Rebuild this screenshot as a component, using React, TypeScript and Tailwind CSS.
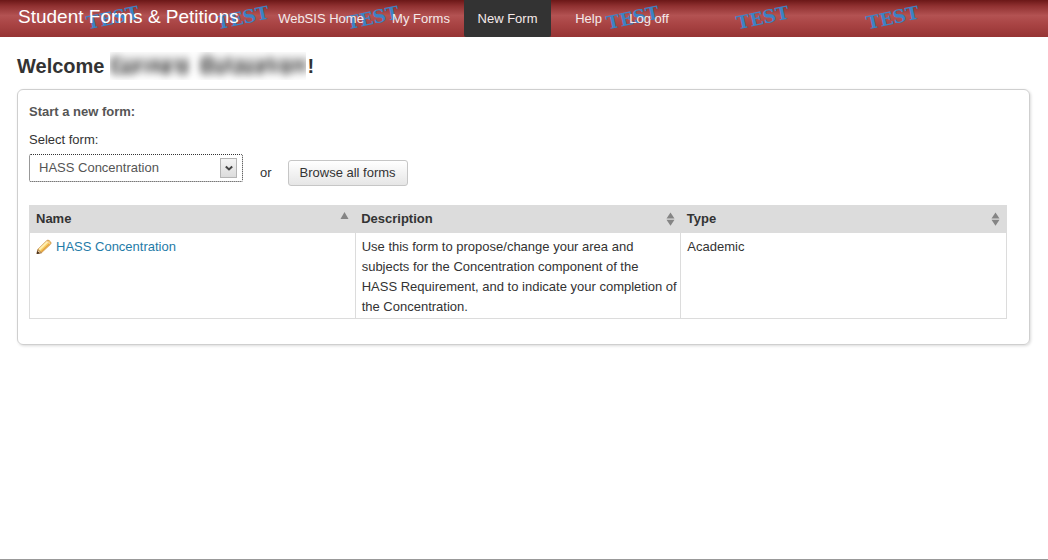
import { useState } from 'react';

const navItems = [
  { label: 'WebSIS Home', style: 'w-[114px]' },
  { label: 'My Forms', style: 'w-[86px]' },
  { label: 'New Form', style: 'w-[87px] rounded-b-xs bg-[#333333]' },
  { label: 'Help', style: 'w-[75px]' },
  { label: 'Log off', style: 'w-[46px]' },
];

function TestMarks() {
  return (
    <div aria-hidden="true" className="absolute inset-0 flex overflow-hidden pl-[48px]">
      {[0, 1, 2, 3, 4, 5, 6].map((n) => (
        <div key={n} className="flex h-[35px] w-[130px] shrink-0 items-center justify-center">
          <span className="-rotate-[12deg] font-['DejaVu_Serif',serif] text-[18px] leading-none font-bold text-[#3d82c4]">
            TEST
          </span>
        </div>
      ))}
    </div>
  );
}

function Header() {
  return (
    <header className="relative bg-[linear-gradient(to_bottom,#6b1717_0%,#8f3030_16%,#b35252_42%,#a94444_65%,#963434_100%)] text-white">
      <TestMarks />
      <div className="relative flex h-[37px] items-center pl-[18px]">
        <h1 className="w-[246px] text-[19px] leading-6 whitespace-nowrap pb-1">Student Forms &amp; Petitions</h1>
        <nav className="flex h-full">
          {navItems.map((item) => (
            <a
              key={item.label}
              href="#"
              className={`flex h-full items-center justify-center text-[13px] whitespace-nowrap text-[#f5eaea] ${item.style}`}
            >
              {item.label}
            </a>
          ))}
        </nav>
      </div>
    </header>
  );
}

function HiddenName() {
  return (
    <svg role="img" aria-label="Name hidden" width="196" height="28" viewBox="0 0 196 28" className="mr-px ml-[6px]">
      <defs>
        <filter id="soft" x="-10%" y="-60%" width="120%" height="220%">
          <feGaussianBlur stdDeviation="3.2 4.2" />
        </filter>
      </defs>
      <g filter="url(#soft)" fill="none" stroke="#777" strokeWidth="4">
        <path d="M-2 13h82M88 13h112" stroke="#ccc" strokeWidth="16" />
        <path d="M12 7H4v13h9v-6M17 10v10h6V10M28 20v-9h4M37 10v10M43 20v-9h5v9M53 11h6v9h-6v-5h6M64 11h5v9h7v-9h-6" />
        <path d="M93 6v14h8v-7h-8M93 6h8v7M107 10v10h6V10M119 5v15M125 11h6v9h-6v-5M136 10v10h6V10M148 11h6v4h-6v5h6M160 5v15M166 10v10M173 11h6v9h-6zM185 20v-9h7v9" />
      </g>
    </svg>
  );
}

function SortIcon({ ascending = false }: { ascending?: boolean }) {
  return (
    <svg aria-hidden="true" width="9" height="16" viewBox="0 0 9 16" fill="#858585" className="shrink-0">
      {ascending ? <path d="M4.5 1 8.5 8h-8z" /> : <path d="M4.5 1.5 8.5 7.5h-8zM.5 8.7h8l-4 6z" />}
    </svg>
  );
}

function PencilIcon() {
  return (
    <svg aria-hidden="true" width="16" height="16" viewBox="0 0 16 16" className="shrink-0">
      <path d="M1 14.6 1.8 10.4 10.7 1.7Q11.8.6 13.2 1.6L14.7 3Q15.5 4.2 14.5 5.3L5.5 13.7z" fill="#f8d069" stroke="#c58a45" strokeWidth=".8" />
      <path d="M3.3 10.7 11.6 2.7" stroke="#fff0b5" strokeWidth="1.8" />
      <path d="M5.2 12.6 13.7 4.7" stroke="#e5a03c" strokeWidth="1.1" />
      <path d="m10.8 1.8 3.6 3.5" stroke="#efc5a5" />
      <path d="M1 14.6 1.9 10.6 5.4 13.7z" fill="#f2d5a2" stroke="#8c6239" strokeWidth=".7" />
      <path d="m.7 14.9.7-3 2.4 2.3z" fill="#3d2a1a" />
    </svg>
  );
}

function FormPicker() {
  const [form, setForm] = useState('HASS Concentration');
  return (
    <div>
      <label htmlFor="form" className="block leading-5">Select form:</label>
      <div className="mt-1 flex items-start">
        <div className="relative">
          <select
            id="form"
            value={form}
            onChange={(e) => setForm(e.target.value)}
            className="block h-[28px] w-[214px] appearance-none rounded-xs border border-dotted border-[#333] bg-white pl-[9px] text-[13px] text-[#555] outline-none"
          >
            <option>HASS Concentration</option>
          </select>
          <span className="pointer-events-none absolute top-1 right-[6px] flex h-5 w-[17px] items-center justify-center border border-[#b5b5b5] bg-linear-to-b from-[#f4f4f4] to-[#dcdcdc]">
            <svg aria-hidden="true" width="8" height="7" viewBox="0 0 8 7" fill="none" stroke="#444" strokeWidth="2">
              <path d="m.8 1.5 3.2 3 3.2-3" />
            </svg>
          </span>
        </div>
        <span className="mt-[9px] ml-[17px] leading-5">or</span>
        <button
          type="button"
          className="mt-[6px] ml-4 h-[26px] w-[120px] rounded-[3px] border border-[#c6c6c6] bg-linear-to-b from-white to-[#e6e6e6] text-[13px] whitespace-nowrap text-[#333]"
        >
          Browse all forms
        </button>
      </div>
    </div>
  );
}

function FormsTable() {
  return (
    <table className="mt-[19px] w-full table-fixed border-collapse border border-[#dcdcdc] text-left">
      <thead>
        <tr className="h-[27px] bg-[#dcdcdc]">
          {['Name', 'Description', 'Type'].map((heading, i) => (
            <th key={heading} scope="col" className="px-[6px] py-0 font-bold">
              <div className="flex items-center justify-between">
                {heading}
                <SortIcon ascending={i === 0} />
              </div>
            </th>
          ))}
        </tr>
      </thead>
      <tbody>
        <tr className="align-top leading-[20px]">
          <td className="border border-[#dcdcdc] px-[6px] pt-1 pb-px">
            <a href="#" className="flex items-center gap-1 text-[#1f7ba8]">
              <PencilIcon />
              HASS Concentration
            </a>
          </td>
          <td className="border border-[#dcdcdc] pt-1 pr-0 pb-px pl-[6px]">
            Use this form to propose/change your area and subjects for the Concentration component of the
            <br />
            HASS Requirement, and to indicate your completion of the Concentration.
          </td>
          <td className="border border-[#dcdcdc] px-[6px] pt-1 pb-px">Academic</td>
        </tr>
      </tbody>
    </table>
  );
}

export default function App() {
  return (
    <div className="min-h-screen border-b border-[#999] bg-white font-['Liberation_Sans',Arial,sans-serif] text-[13px] text-[#333]">
      <Header />
      <main className="pr-[18px] pl-[17px]">
        <h2 className="flex h-[52px] items-center pt-[6px] text-[20px] font-bold">
          Welcome
          <HiddenName />!
        </h2>
        <section className="rounded-md border border-[#cfcfcf] pt-3 pr-[22px] pb-[25px] pl-[11px] shadow-[1px_1px_3px_rgba(0,0,0,0.15)]">
          <h3 className="mb-2 leading-5 font-bold text-[#555]">Start a new form:</h3>
          <FormPicker />
          <FormsTable />
        </section>
      </main>
    </div>
  );
}
